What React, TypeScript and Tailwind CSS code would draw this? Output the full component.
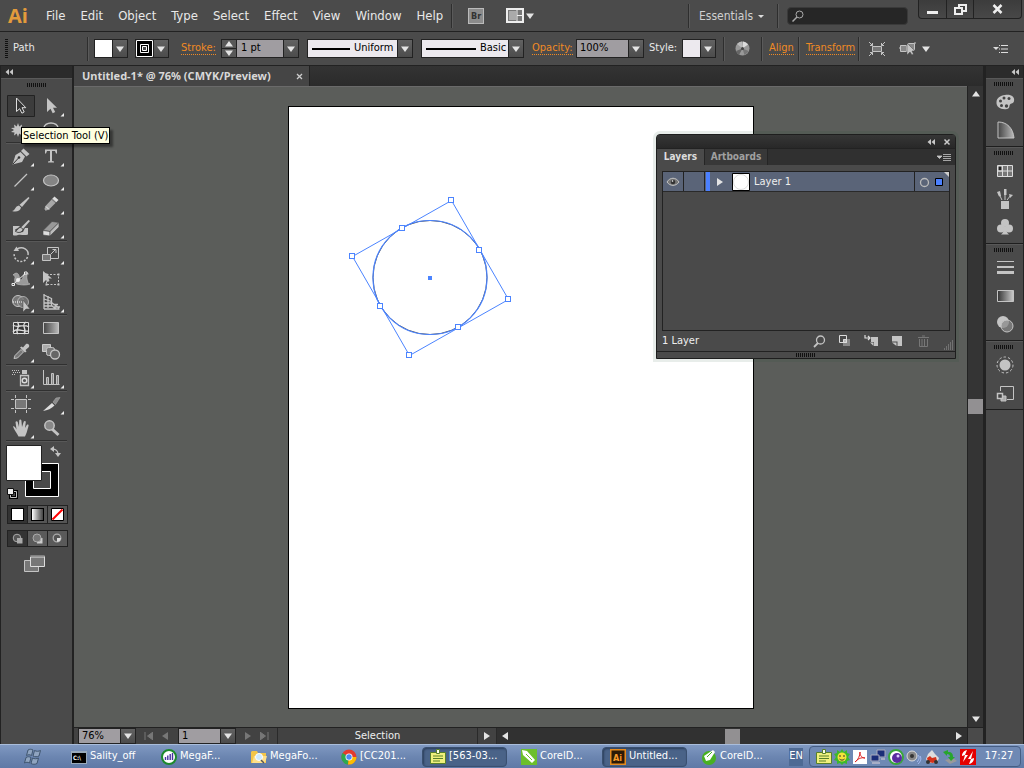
import React from 'react';

const menus = ['File', 'Edit', 'Object', 'Type', 'Select', 'Effect', 'View', 'Window', 'Help'];

const L = '#c4c4c4';

const Caret = ({ dir = 'down', color = '#e4e4e4' }: { dir?: 'down' | 'up' | 'left' | 'right'; color?: string }) => {
  const shapes = {
    down: 'M0 1.500h8L4 7z',
    up: 'M0 6.500h8L4 1z',
    left: 'M7 0v8L1 4z',
    right: 'M1 0v8L7 4z',
  };
  return (
    <svg width="8" height="8" viewBox="0 0 8 8" aria-hidden="true">
      <path d={shapes[dir]} fill={color} />
    </svg>
  );
};

const DoubleLeft = () => (
  <svg width="8" height="6" viewBox="0 0 8 6" aria-hidden="true">
    <path d="M4 0v6L0.5 3zM8 0v6L4.500 3z" fill="#c8c8c8" />
  </svg>
);

const Grip = () => (
  <svg width="20" height="4" viewBox="0 0 20 4" aria-hidden="true">
    <path d="M0.5 0v4M2.500 0v4M4.500 0v4M6.500 0v4M8.500 0v4M10.500 0v4M12.500 0v4M14.500 0v4M16.500 0v4M18.500 0v4" stroke="#111" />
  </svg>
);

const Divider = () => <span className="h-6 w-px shrink-0 bg-[#2e2e2e] shadow-[1px_0_0_#5a5a5a]" />;

const DropButton = ({ label }: { label: string }) => (
  <button aria-label={label} className="flex h-full w-[15px] shrink-0 items-center justify-center border-l border-[#222] bg-linear-to-b from-[#626262] to-[#4c4c4c]">
    <Caret />
  </button>
);

const SwatchPicker = ({ label, children }: { label: string; children: React.ReactNode }) => (
  <div className="flex h-[19px] w-[34px] shrink-0 border border-[#222]">
    <button aria-label={label} className="flex-1">
      {children}
    </button>
    <DropButton label={label + ' options'} />
  </div>
);

const LineSelect = ({ id, value, width, line }: { id: string; value: string; width: string; line: number }) => (
  <div className={'flex h-[19px] shrink-0 items-center border border-[#222] bg-[#ece9ee] ' + width}>
    <svg className="ml-1 shrink-0" width={line} height="2" aria-hidden="true">
      <path d={'M0 1h' + line} stroke="#000" strokeWidth="2" />
    </svg>
    <select id={id} aria-label={value + ' profile'} className="h-full min-w-0 flex-1 appearance-none bg-transparent pl-1 text-[11px] text-black">
      <option>{value}</option>
    </select>
    <DropButton label={value + ' options'} />
  </div>
);

const accent = 'border-b border-dotted border-[#f08a24] text-[11px] leading-3 text-[#f08a24]';

/* ---------- tool glyphs, each on a 30x24 cell ---------- */

const glyphs: Record<string, React.ReactNode> = {
  Selection: <path d="M10.5 4v13.500l3.200-2.800 2.200 4.500 2.300-1.200-2.200-4.300h3.800z" fill="#333" stroke="#ddd" />,
  'Direct Selection': <path d="M11 4v14l3.500-3.200 2.200 4.400 2.500-1.200-2.200-4.300H21z" fill={L} />,
  'Magic Wand': (
    <path d="M12 5l1.200 3.500L16 6.500l-.5 3.300 3.500.2-3 2 3 2-3.500.4.5 3.100-2.800-2-1.200 3.500-1.200-3.500L8 17.500l.5-3.100L5 14l3-2-3-2 3.500-.2L8 6.500l2.800 2z" fill={L} />
  ),
  Lasso: (
    <g fill="none" stroke={L} strokeWidth="1.500">
      <ellipse cx="15" cy="10" rx="7" ry="5" />
      <path d="M10 13c4-5 8-1 5 1s-5 0-4 4" />
    </g>
  ),
  Pen: (
    <g>
      <path d="M6.500 20.500l3-9.500 5-3 4.500 4.500-3 5.500z" fill={L} />
      <path d="M15 7l2.500-2.500 6 5.500-3 2.500z" fill={L} />
      <path d="M7 20l5.500-6" stroke="#333" />
      <circle cx="13" cy="13.500" r="1.300" fill="#333" />
    </g>
  ),
  Type: <path d="M9 5.500h12v4h-1l-1-2.500h-3v10l2 .5v1h-6v-1l2-.5V7h-3l-1 2.500H9z" fill={L} />,
  'Line Segment': <path d="M8.500 18.500L21 6" stroke={L} strokeWidth="1.300" />,
  Ellipse: <ellipse cx="15" cy="12.500" rx="7.500" ry="5.500" fill="#858585" stroke={L} strokeWidth="1.200" />,
  Paintbrush: (
    <g fill={L}>
      <path d="M22.500 5L23.500 6 16 15l-2.500-2.200z" />
      <path d="M6 19c3 0 3-5 7-5.500l2 2C14.500 19 10 20.500 6 19z" />
    </g>
  ),
  Pencil: (
    <g>
      <path d="M7.500 19.500l2-5.500L17 6l4 3.500-8 8z" fill="#a8a8a8" />
      <path d="M16.500 6.500l2-2 4 3.500-2 2z" fill="#ddd" />
      <path d="M7.500 19.500l.6-2 1.200 1.200zM16 7.500l4 3.500" fill="#333" stroke="#444" strokeWidth=".6" />
      <path d="M10 14.500l3 3" stroke="#eee" />
    </g>
  ),
  'Blob Brush': (
    <g fill={L}>
      <path d="M7 10h7l-2 2-3 1.500L12 17l5-1 2-4h3v6.500c-4 1.500-7-.5-10 .5-2 .5-4 1-5 0z" />
      <path d="M22.500 4l1.500 1-7 8-2-1.500z" />
      <path d="M9 15c3 0 3-4 6-3.500l2 1.800c-1 3.500-5 4-8 1.700z" stroke="#333" strokeWidth=".7" />
    </g>
  ),
  Eraser: (
    <g stroke="#444" strokeWidth=".6">
      <path d="M7 14.500L16 5.500l7 1-9 9z" fill="#999" />
      <path d="M7 14.500l7 1v4.500l-7-1z" fill="#ddd" />
      <path d="M14 15.500l9-9v4.500l-9 9z" fill="#bbb" />
    </g>
  ),
  Rotate: (
    <g fill="none" stroke={L} strokeWidth="1.500">
      <path d="M11 7c6-3.500 12 1 11 6" />
      <path d="M21.500 15c-2 6-11 6-13 0-.5-2-.3-3 0-4" strokeDasharray="2 1.500" />
      <path d="M7.500 9l3-4.500 2.500 4.500z" fill={L} stroke="none" />
    </g>
  ),
  Scale: (
    <g fill="none" stroke={L}>
      <path d="M11.500 12V5.500h11v11H15" />
      <path d="M6.500 12.500h8v6h-8z" fill="#777" />
      <path d="M15 12l5-5M16.500 7.500h3.500v3.500" />
    </g>
  ),
  Warp: (
    <g>
      <path d="M7 9c4-4 6-1 6.500 3 1 3 3 2 3.500-1 .5-4 3-6 5.500-3-1.500-.5-2 2-1.500 5 .5 3 1.500 5 3 5-4 1.500-8 1-11 .5-4-.5-5-3-4-7 0-1.500-1-2.500-2-2.500z" fill="#999" stroke={L} strokeWidth=".6" />
      <path d="M7 18.500L12 14l8-7" stroke="#eee" />
      <path d="M6 17.500h2.500v2H6zM18.500 6h2.500v2h-2.500z" fill="#444" stroke="#eee" />
      <circle cx="12" cy="14" r="2" fill="#eee" />
    </g>
  ),
  'Free Transform': (
    <g>
      <path d="M10.500 8.500h12v10h-12z" fill="none" stroke={L} strokeDasharray="2 1.500" />
      <path d="M9.500 7.500h2v2h-2zM21.500 7.500h2v2h-2zM9.500 17.500h2v2h-2zM21.500 17.500h2v2h-2z" fill={L} />
      <path d="M7 5v12l3-3 1.500 2 2-1-1-2.500H16z" fill={L} />
    </g>
  ),
  'Shape Builder': (
    <g>
      <circle cx="12" cy="11" r="5.500" fill="#777" stroke={L} />
      <circle cx="17" cy="12" r="5.500" fill="#777" stroke={L} opacity=".8" />
      <path d="M7 12h10" stroke="#fff" strokeDasharray="1 1" />
      <path d="M17 10v12l3-3h4z" fill={L} stroke="#444" strokeWidth=".5" />
    </g>
  ),
  'Perspective Grid': (
    <g stroke={L} fill="none" strokeWidth="1.300">
      <path d="M8 4v15M12 6v12M15.500 8v8" />
      <path d="M8 5l7.500 3.500M8 9l7.500 2.500M8 13h8l7 5M8 16h8l4 3M8 19h15.500M17 14.500h5M18 17h6" />
    </g>
  ),
  Mesh: (
    <g fill="none" stroke="#ddd">
      <path d="M7.500 6.500h15v11h-15z" fill="#383838" />
      <path d="M11 6c5 4-3 8 1 12M20 6c-6 4 2 7-2 12M7 9c5 4 9-2 16 2M7 16c4-5 9 0 16-1" strokeWidth="1.400" />
    </g>
  ),
  Gradient: <path d="M7.500 6.500h15v11h-15z" fill="url(#toolGradient)" stroke={L} />,
  Eyedropper: (
    <g>
      <path d="M8 18.500l1-3 6-6 2.500 2.500-6 6z" fill="#777" stroke={L} />
      <path d="M14 7.500l1.500-1 1.500 1 3-3.500c2-1 4 1 3 3l-3.500 3 1 1.500-1.500 1z" fill={L} />
    </g>
  ),
  Blend: (
    <g stroke={L}>
      <path d="M6.500 4.500h8v7h-8z" fill="#aaa" stroke="#ccc" />
      <rect x="10.500" y="7.500" width="8" height="8" rx="2" fill="#777" />
      <circle cx="19" cy="14.500" r="4.500" fill="#666" strokeWidth="1.300" />
    </g>
  ),
  'Symbol Sprayer': (
    <g>
      <path d="M6 4.500h8M7 6.500h7M6 8.500h4" stroke={L} strokeDasharray="1 1" />
      <path d="M14.500 9.500h8v10h-8z" fill="#555" stroke={L} strokeWidth="1.300" />
      <path d="M16 4h5v4h-5z" fill={L} />
      <circle cx="18.500" cy="14.500" r="2.300" fill="none" stroke="#ddd" strokeWidth="1.400" />
    </g>
  ),
  'Column Graph': (
    <g fill="#888" stroke={L}>
      <path d="M7.500 4v14.500h16" fill="none" />
      <path d="M10.500 11.500h2v7h-2zM15.500 7.500h2v11h-2zM20.500 9.500h2v9h-2z" />
    </g>
  ),
  Artboard: (
    <g stroke={L} fill="none">
      <path d="M9.500 7.500h11v9h-11z" fill="#777" />
      <path d="M5 7.500h3M22 7.500h3M5 16.500h3M22 16.500h3M9.500 3v3M20.500 3v3M9.500 18v3M20.500 18v3" />
    </g>
  ),
  Slice: (
    <g>
      <path d="M7 19l9-8 2.500 2.500c-3 3-7 5-11.500 5.500z" fill="#ddd" />
      <path d="M17 10l3-4 4-.5-4.500 7z" fill="#8c8c8c" stroke="#aaa" strokeWidth=".6" />
    </g>
  ),
  Hand: (
    <path d="M7 10.500c1-.8 2 .3 3.500 3L9.500 6c.5-1.300 2-1 2.200 0l1.300 5 .2-6.500c.4-1.200 1.800-1.200 2.200 0L16 11l1.800-5.500c.5-1 2-.7 2 .5L19 12l1.800-3c.8-1 2-.3 1.800.7l-2 7-1.600 3.800h-6.500C11 17 8 14 7 10.500z" fill={L} />
  ),
  Zoom: (
    <g>
      <path d="M16 13l6.500 6" stroke={L} strokeWidth="3" />
      <circle cx="13.500" cy="9.500" r="4.700" fill="#888" stroke={L} strokeWidth="1.500" />
    </g>
  ),
};

const toolGroups: string[][] = [
  ['Selection', 'Direct Selection', 'Magic Wand', 'Lasso'],
  ['Pen', 'Type', 'Line Segment', 'Ellipse', 'Paintbrush', 'Pencil', 'Blob Brush', 'Eraser'],
  ['Rotate', 'Scale', 'Warp', 'Free Transform', 'Shape Builder', 'Perspective Grid'],
  ['Mesh', 'Gradient', 'Eyedropper', 'Blend'],
  ['Symbol Sprayer', 'Column Graph'],
  ['Artboard', 'Slice', 'Hand', 'Zoom'],
];

const noFlyout = ['Selection', 'Magic Wand', 'Lasso', 'Paintbrush', 'Blob Brush', 'Free Transform', 'Mesh', 'Gradient', 'Blend', 'Artboard', 'Zoom'];

const Tool = ({ name }: { name: string }) => (
  <button aria-label={name + ' Tool'} className="h-6 w-[30px]">
    <svg width="30" height="24" viewBox="0 0 30 24">
      {name === 'Selection' && <path d="M1.500 1.500h27v21h-27z" fill="#3c3c3c" stroke="#222" />}
      {glyphs[name]}
      {!noFlyout.includes(name) && <path d="M28 19v3.500h-3.500z" fill="#eee" />}
    </svg>
  </button>
);

const Toolbar = () => (
  <aside className="relative flex w-[74px] shrink-0 flex-col border-x border-[#222] border-r-2 bg-[#4a4a4a]">
    <div className="flex h-3 items-center bg-[#2b2b2b] pl-1">
      <DoubleLeft />
    </div>
    <div className="flex h-4 justify-center border-t border-[#5a5a5a] pt-1">
      <Grip />
    </div>
    {toolGroups.map((group) => (
      <div key={group[0]} className="mx-[5px]">
        <div className="grid w-[60px] grid-cols-2">
          {group.map((name) => (
            <Tool key={name} name={name} />
          ))}
        </div>
        <div className="h-0.5 border-t border-b border-t-[#303030] border-b-[#585858]" />
      </div>
    ))}
    <button aria-label="Fill and Stroke" className="ml-[5px] h-[63px] w-[60px]">
      <svg className="block" width="60" height="62" viewBox="0 0 60 62">
        <path d="M19.500 20.500h33v33h-33z" fill="#000" stroke="#fff" />
        <path d="M27.500 28.500h17v17h-17z" fill="#4a4a4a" stroke="#fff" />
        <path d="M.5 2.500h35v35H.5z" fill="#fff" stroke="#222" />
        <path d="M46 6c5 0 6 2 6 6" fill="none" stroke={L} strokeWidth="1.300" />
        <path d="M44 6l4-3v6zM49 10h6l-3 4z" fill={L} />
        <path d="M4.500 48.500h6v6h-6z" fill="none" stroke="#000" strokeWidth="3" />
        <path d="M4.500 48.500h6v6h-6z" fill="none" stroke={L} />
        <path d="M1.500 45.500h6v6h-6z" fill="#eee" stroke="#111" />
      </svg>
    </button>
    <div className="mx-[6px] flex h-[19px] w-[61px] border border-[#222]">
      <button aria-label="Color" className="flex flex-1 items-center justify-center bg-[#333]">
        <span className="size-[13px] border border-black bg-white" />
      </button>
      <button aria-label="Gradient" className="flex flex-1 items-center justify-center border-x border-[#222] bg-[#555]">
        <span className="size-[13px] border border-black bg-linear-to-r from-white to-[#444]" />
      </button>
      <button aria-label="None" className="flex flex-1 items-center justify-center bg-[#555]">
        <svg width="13" height="13" viewBox="0 0 13 13">
          <path d="M.5.5h12v12H.5z" fill="#fff" stroke="#000" />
          <path d="M1.500 11.500l10-10" stroke="#f00" strokeWidth="2" />
        </svg>
      </button>
    </div>
    <div className="mx-[6px] mt-1.5 flex h-[17px] w-[61px] border border-[#222] bg-[#5a5a5a]">
      <button aria-label="Draw Normal" className="flex flex-1 items-center justify-center bg-[#333]">
        <svg width="13" height="12" viewBox="0 0 13 12">
          <circle cx="6" cy="5" r="3.800" fill="#555" stroke="#aaa" />
          <path d="M6 5h5.500v5.500H6z" fill="#aaa" />
        </svg>
      </button>
      <button aria-label="Draw Behind" className="flex flex-1 items-center justify-center border-x border-[#222]">
        <svg width="13" height="12" viewBox="0 0 13 12">
          <path d="M6 5h5.500v5.500H6z" fill="#ccc" />
          <circle cx="6" cy="5" r="4" fill="#777" stroke="#aaa" />
        </svg>
      </button>
      <button aria-label="Draw Inside" className="flex flex-1 items-center justify-center">
        <svg width="13" height="12" viewBox="0 0 13 12">
          <circle cx="6" cy="5" r="3.800" fill="#555" stroke="#aaa" strokeWidth="1.300" />
          <path d="M6 5h4L9 8 6 9z" fill="#ddd" />
        </svg>
      </button>
    </div>
    <button aria-label="Screen Mode" className="mt-2 ml-[23px] h-[18px] w-[22px]">
      <svg width="22" height="18" viewBox="0 0 22 18">
        <path d="M.5 5.500h14v11H.5z" fill="#777" stroke={L} />
        <path d="M6.500.5h14v11h-14z" fill="#777" stroke="#ddd" />
        <path d="M6 1h15" stroke="#222" />
        <path d="M7 2h14" stroke="#ddd" />
      </svg>
    </button>
    <div role="tooltip" className="absolute top-[61px] left-5 z-20 border border-black bg-[#ffffe1] px-px text-[11px] leading-[15px] whitespace-nowrap text-black shadow-[3px_3px_2px_#0006]">
      Selection Tool (V)
    </div>
  </aside>
);

/* ---------- document ---------- */

const handles = [[451, 200], [508, 299], [409, 355], [352, 256], [402, 228], [479, 250], [458, 327], [380, 306]];

const Artboard = () => (
  <svg className="h-[603px] w-[466px] shrink-0 border border-black bg-white" viewBox="289 107 464 601">
    <ellipse cx="430" cy="277.500" rx="57" ry="57" fill="none" stroke="#555" strokeWidth="1" />
    <ellipse cx="430" cy="277.500" rx="57" ry="57" fill="none" stroke="#4b84ff" strokeWidth="1.200" />
    <path d="M451.500 200.500l57 99-99 56-57-99z" fill="none" stroke="#4b84ff" />
    {handles.map(([x, y]) => (
      <rect key={x} x={x - 2.5} y={y - 2.5} width="5" height="5" fill="#fff" stroke="#4b84ff" />
    ))}
    <rect x="428" y="276" width="4" height="4" fill="#4b84ff" />
  </svg>
);

const LayersPanel = () => (
  <section aria-label="Layers" className="absolute top-[47px] right-[11px] z-10 flex h-[225px] w-[300px] flex-col rounded-t-sm border border-[#1e1e1e] bg-[#4a4a4a] text-[11px] shadow-[0_0_0_3px_#1e50321a]">
    <div className="flex h-[14px] shrink-0 items-center justify-end gap-2 border-b border-[#222] bg-linear-to-b from-[#363636] to-[#282828] pr-1">
      <button aria-label="Collapse panel">
        <DoubleLeft />
      </button>
      <button aria-label="Close panel">
        <svg className="block" width="8" height="8" viewBox="0 0 8 8">
          <path d="M1.500 1.500l5 5M6.500 1.500l-5 5" stroke="#ccc" strokeWidth="1.500" />
        </svg>
      </button>
    </div>
    <div role="tablist" className="flex h-4 shrink-0 bg-[#303030] text-[10px] leading-4 font-bold">
      <button role="tab" className="w-[47px] bg-[#4a4a4a] text-[#ddd]">Layers</button>
      <button role="tab" className="w-16 border-x border-[#252525] bg-[#383838] text-[#a0a0a0]">Artboards</button>
      <button aria-label="Panel menu" className="mr-1 ml-auto">
        <svg width="14" height="9" viewBox="0 0 14 9">
          <path d="M0 3h5L2.500 5.500zM6 1.500h8M6 3.500h8M6 5.500h8M6 7.500h8" fill={L} stroke={L} strokeWidth=".8" />
        </svg>
      </button>
    </div>
    <div className="mx-[5px] mt-[6px] flex-1 border border-[#222]">
      <div className="flex h-5 items-stretch border-b border-[#2a2a2a] bg-[#5a6478] text-[#eee]">
        <button aria-label="Toggle visibility" className="flex w-[21px] items-center justify-center border-r border-[#222]">
          <svg width="14" height="10" viewBox="0 0 14 10">
            <path d="M1 5c3-5 9-5 12 0-3 4.500-9 4.500-12 0z" fill="#777" stroke={L} />
            <circle cx="7" cy="5" r="2.300" fill="#333" />
            <circle cx="6.500" cy="4" r=".8" fill="#fff" />
          </svg>
        </button>
        <button aria-label="Toggle lock" className="w-[21px] border-r border-[#222]" />
        <span className="ml-px w-[4px] bg-[#4b80ff]" />
        <button aria-label="Expand layer" className="ml-[5px] flex w-[10px] items-center justify-center">
          <Caret dir="right" />
        </button>
        <svg className="ml-[7px] self-center" width="18" height="18" viewBox="0 0 18 18">
          <path d="M.5.5h17v17H.5z" fill="#fff" stroke="#000" />
          <circle cx="9" cy="9" r="7.500" fill="none" stroke="#ddd" />
        </svg>
        <span className="ml-1 flex-1 leading-5">Layer 1</span>
        <span className="flex w-[35px] border-l border-[#222]">
          <svg width="34" height="20" viewBox="0 0 34 20">
            <circle cx="9.500" cy="10.500" r="4" fill="none" stroke="#bbb" strokeWidth="1.300" />
            <path d="M20.500 6.500h7v7h-7z" fill="#4b80ff" stroke="#000" />
            <path d="M29 0h5v5z" fill="#ccc" />
          </svg>
        </span>
      </div>
    </div>
    <div className="flex h-5 shrink-0 items-center pl-[5px] text-[#eee]">
      <span className="flex-1">1 Layer</span>
      <button aria-label="Locate object" className="flex w-[26px] justify-center">
        <svg width="13" height="13" viewBox="0 0 13 13">
          <circle cx="7.500" cy="5" r="4" fill="none" stroke={L} strokeWidth="1.300" />
          <path d="M5 8l-4 4" stroke={L} strokeWidth="1.800" />
        </svg>
      </button>
      <button aria-label="Clipping mask" className="flex w-[26px] justify-center">
        <svg width="12" height="12" viewBox="0 0 12 12">
          <path d="M4 4h7v7H4z" fill="#888" />
          <path d="M.5.5h7v7h-7z" fill="none" stroke="#ddd" />
          <path d="M4.500 4.500h3v3h-3z" fill="#bbb" stroke="#ddd" />
        </svg>
      </button>
      <button aria-label="New sublayer" className="flex w-[26px] justify-center">
        <svg width="15" height="12" viewBox="0 0 15 12">
          <path d="M1 0v3h5M4 1l2 2-2 2" fill="none" stroke="#ddd" strokeWidth="1.200" />
          <path d="M7 2h7v9h-4V7H7z" fill={L} />
          <path d="M6 7.500h3.500V11z" fill={L} />
        </svg>
      </button>
      <button aria-label="New layer" className="flex w-[26px] justify-center">
        <svg width="12" height="12" viewBox="0 0 12 12">
          <path d="M1 1h10v10H6.500V6.500H1z" fill={L} />
          <path d="M1 7.500h4.500V11z" fill={L} />
        </svg>
      </button>
      <button aria-label="Delete layer" className="flex w-[26px] justify-center">
        <svg width="11" height="12" viewBox="0 0 11 12">
          <path d="M0 2.500h11M4 1h3M1.500 4v7.500h8V4M4 4v7M6.500 4v7" fill="none" stroke="#777" />
        </svg>
      </button>
      <svg className="mb-px ml-2 self-end" width="11" height="10" viewBox="0 0 11 10">
        <path d="M0 9h10M2 7h8M4 5h6M6 3h4M8 1h2" stroke="#999" strokeDasharray="1 1" />
      </svg>
    </div>
    <div className="flex h-[7px] shrink-0 justify-center border-t border-[#222] pt-px">
      <Grip />
    </div>
  </section>
);

const StatusBar = () => (
  <div className="flex h-[17px] shrink-0 items-stretch border-t border-[#222] bg-[#424242] text-[11px]">
    <div className="ml-1 flex w-[58px] border border-[#222]">
      <input aria-label="Zoom level" defaultValue="76%" className="w-[41px] bg-[#a09da1] pl-[3px] text-[11px] text-black" />
      <DropButton label="Zoom presets" />
    </div>
    <button aria-label="First artboard" className="ml-2">
      <svg width="9" height="8" viewBox="0 0 9 8"><path d="M1 0v8M9 0v8L3.500 4z" fill="#777" stroke="#777" /></svg>
    </button>
    <button aria-label="Previous artboard" className="ml-2"><Caret dir="left" color="#777" /></button>
    <div className="ml-[9px] flex w-[58px] border border-[#222]">
      <input aria-label="Artboard number" defaultValue="1" className="w-[41px] bg-[#a09da1] pl-[3px] text-[11px] text-black" />
      <DropButton label="Artboards" />
    </div>
    <button aria-label="Next artboard" className="ml-2"><Caret dir="right" color="#777" /></button>
    <button aria-label="Last artboard" className="ml-2">
      <svg width="9" height="8" viewBox="0 0 9 8"><path d="M8 0v8M0 0v8l5.500-4z" fill="#777" stroke="#777" /></svg>
    </button>
    <div className="ml-2 w-[200px] border-l border-[#2a2a2a] text-center leading-4 text-[#eee]">Selection</div>
    <button aria-label="Status options" className="flex w-5 items-center justify-center border-x border-[#2a2a2a]">
      <Caret dir="right" />
    </button>
    <div className="flex flex-1 items-center justify-between bg-[#313131] px-1">
      <button aria-label="Scroll left"><Caret dir="left" /></button>
      <span className="size-[15px] bg-[#929092]" />
      <button aria-label="Scroll right"><Caret dir="right" /></button>
    </div>
    <div className="w-4 border-l border-[#222] bg-[#4a4a4a]" />
  </div>
);

const Document = () => (
  <main className="flex min-w-0 flex-1 flex-col border-r-2 border-[#222]">
    <div className="flex h-5 shrink-0 bg-linear-to-b from-[#333] to-[#2b2b2b]">
      <div className="flex w-[236px] items-center justify-between border-r border-[#222] bg-[#454545] pr-[6px] pl-2 font-['Noto_Sans',sans-serif] text-[11px] font-bold whitespace-nowrap text-[#d8d8d8]">
        Untitled-1* @ 76% (CMYK/Preview)
        <button aria-label="Close document">
          <svg className="block" width="7" height="7" viewBox="0 0 7 7">
            <path d="M1 1l5 5M6 1L1 6" stroke="#ccc" strokeWidth="1.300" />
          </svg>
        </button>
      </div>
    </div>
    <div className="flex min-h-0 flex-1">
      <div className="relative flex min-w-0 flex-1 items-center justify-center border-t border-[#6a6a6a] bg-[#5b5d5a] pl-px">
        <Artboard />
        <LayersPanel />
      </div>
      <div className="flex w-4 shrink-0 flex-col items-center justify-between border-l border-[#222] bg-[#343434] py-1">
        <button aria-label="Scroll up"><Caret dir="up" /></button>
        <span className="size-[15px] bg-[#929092]" />
        <button aria-label="Scroll down"><Caret /></button>
      </div>
    </div>
    <StatusBar />
  </main>
);

/* ---------- right dock ---------- */

const dock: { name: string; icon: React.ReactNode }[][] = [
  [
    { name: 'Color', icon: <g><path d="M10 3c6-1 10 2 9 6-.5 3-3 2-4 3.500s0 4-3 4.500C6 18 1 15 1.500 10 1.800 6 5 3.500 10 3z" fill={L} /><g fill="#444"><circle cx="5.500" cy="9" r="1.500" /><circle cx="9" cy="6" r="1.500" /><circle cx="14" cy="6.500" r="1.500" /><circle cx="6.500" cy="13.500" r="1.500" /><circle cx="11.500" cy="14" r="1.700" /></g></g> },
    { name: 'Color Guide', icon: <path d="M3 2c9 0 15 6 16 16H3z" fill="url(#toolGradient)" stroke={L} /> },
  ],
  [
    { name: 'Swatches', icon: <g stroke="#ddd"><path d="M2.500 4.500h15v11h-15z" fill="#777" /><path d="M3 5h4v5H3z" fill="#222" /><path d="M2 10h16M7.500 4v12M12.500 4v12" fill="none" /></g> },
    { name: 'Brushes', icon: <g><path d="M6 12h8v8H6z" fill={L} /><path d="M7 11L4 5M10 11V2M12 11l4-5" stroke={L} /><path d="M2 3l3-1 1 5-2 .5zM9 0h2.500v6H9zM14 5l4 1-3 3z" fill={L} /></g> },
    { name: 'Symbols', icon: <g fill={L}><circle cx="10" cy="6" r="4" /><circle cx="6" cy="11.500" r="4" /><circle cx="14" cy="11.500" r="4" /><path d="M9 10h2c0 4 1 6 3 7.500H6c2-1.500 3-3.500 3-7.500z" /></g> },
  ],
  [
    { name: 'Stroke', icon: <g fill={L}><path d="M2 3h17v1H2zM2 8h17v2H2zM2 13h17v3H2z" /></g> },
    { name: 'Gradient', icon: <path d="M2.500 4.500h16v11h-16z" fill="url(#dockGradient)" stroke={L} /> },
    { name: 'Transparency', icon: <g><circle cx="8" cy="8" r="6" fill={L} /><circle cx="12" cy="12" r="6" fill="#888b" stroke={L} /></g> },
  ],
  [
    { name: 'Appearance', icon: <g><circle cx="10" cy="10" r="5.500" fill={L} /><circle cx="10" cy="10" r="8" fill="none" stroke={L} strokeDasharray="2.500 2" /></g> },
    { name: 'Graphic Styles', icon: <g fill="none" stroke={L}><path d="M5.500 8V3.500h13v13H12" /><path d="M6 13h5v5H6z" fill="#aaa" /><path d="M2.500 10.500h5v5h-5z" strokeWidth="1.500" fill="#444" /></g> },
  ],
];

const Dock = () => (
  <aside className="flex w-[39px] shrink-0 flex-col border-x border-[#222] bg-[#4a4a4a]">
    <div className="flex h-3 items-center justify-end bg-[#2b2b2b] pr-1">
      <DoubleLeft />
    </div>
    {dock.map((group) => (
      <div key={group[0].name} className="flex flex-col items-center border-b border-[#1e1e1e] pb-[2px]">
        <div className="h-[10px] w-full border-t border-[#585858] pt-[3px] pl-2">
          <Grip />
        </div>
        {group.map(({ name, icon }) => (
          <button key={name} aria-label={name} className="flex h-7 w-full items-center justify-center">
            <svg width="20" height="20" viewBox="0 0 20 20">{icon}</svg>
          </button>
        ))}
      </div>
    ))}
  </aside>
);

/* ---------- top bars ---------- */

const MenuBar = () => (
  <header className="flex h-[31px] shrink-0 items-center bg-[#4b4b4b] text-[#e8e8e8]">
    <span className="w-[46px] pl-2 font-['Open_Sans',sans-serif] text-[20px] leading-6 font-bold text-[#e39b3c]">Ai</span>
    <nav className="flex gap-[15px] text-[13px]">
      {menus.map((m) => (
        <button key={m}>{m}</button>
      ))}
    </nav>
    <span className="ml-2 flex items-center">
      <Divider />
    </span>
    <button aria-label="Bridge" className="ml-4 size-4 border border-[#bbb] bg-[#8c8c8c] text-[9px] leading-3 font-bold text-[#333]">Br</button>
    <button aria-label="Arrange documents" className="ml-[22px] flex items-center gap-0.5">
      <svg width="18" height="15" viewBox="0 0 18 15">
        <path d="M1 1h16v13H1z" fill="#777" stroke="#eee" strokeWidth="2" />
        <path d="M3 3h7v9H3z" fill="#aaa" />
        <path d="M11 2v11M11 7.500h6" stroke="#eee" />
      </svg>
      <Caret />
    </button>
    <div className="ml-auto flex h-full items-center">
      <Divider />
      <select aria-label="Workspace" className="ml-[10px] w-[58px] appearance-none text-[12px] text-[#d0d0d0]">
        <option>Essentials</option>
      </select>
      <svg className="mr-3" width="8" height="8" viewBox="0 0 8 8"><path d="M1 3h6L4 6z" fill="#ddd" /></svg>
      <Divider />
      <label className="ml-[9px] flex h-[18px] w-[121px] items-center rounded-sm border border-[#3a3a3a] bg-[#262626] pl-1">
        <svg width="12" height="12" viewBox="0 0 12 12" fill="none" stroke="#aaa">
          <circle cx="7.500" cy="4.500" r="3.500" />
          <path d="M5 7l-4.500 4.500" strokeWidth="1.500" />
        </svg>
        <input type="search" aria-label="Search" className="min-w-0 flex-1" />
      </label>
      <div className="mr-[2px] ml-[10px] flex h-[19px] self-start rounded-b-sm border border-t-0 border-[#222] bg-linear-to-b from-[#3c3c3c] to-[#484848]">
        <button aria-label="Minimize" className="flex w-[27px] items-center justify-center">
          <svg width="11" height="11" viewBox="0 0 11 11"><path d="M0 7h11v3H0z" fill="#eee" /></svg>
        </button>
        <button aria-label="Restore" className="flex w-[28px] items-center justify-center border-x border-[#222]">
          <svg width="13" height="11" viewBox="0 0 13 11" fill="none" stroke="#eee" strokeWidth="2">
            <path d="M5 4V1h7v6H9M1 4h7v6H1z" />
          </svg>
        </button>
        <button aria-label="Close" className="flex w-[47px] items-center justify-center">
          <svg width="11" height="10" viewBox="0 0 11 10"><path d="M1.500 1l8 8M9.500 1l-8 8" stroke="#eee" strokeWidth="2.500" /></svg>
        </button>
      </div>
    </div>
  </header>
);

const OptionsBar = () => (
  <div className="flex h-[35px] shrink-0 items-center border-y border-[#222] bg-[#4b4b4b] text-[11px] text-[#e8e8e8]">
    <svg className="ml-[5px] shrink-0" width="3" height="20" viewBox="0 0 3 20">
      <path d="M1.500 0v20" stroke="#111" strokeWidth="3" strokeDasharray="1 1" />
    </svg>
    <span className="ml-[5px] w-[74px]">Path</span>
    <Divider />
    <span className="w-[6px]" />
    <SwatchPicker label="Fill">
      <span className="block h-full bg-white" />
    </SwatchPicker>
    <span className="w-[7px]" />
    <SwatchPicker label="Stroke color">
      <svg className="block" width="17" height="17" viewBox="0 0 17 17">
        <path d="M0 0h17v17H0z" />
        <path d="M.5.5h16v16H.5zM4.500 4.500h8v8h-8z" fill="none" stroke="#fff" />
        <path d="M6.500 6.500h4v4h-4z" fill="#4a4a4a" stroke="#fff" />
      </svg>
    </SwatchPicker>
    <span className="ml-3 w-10 shrink-0">
      <label htmlFor="stroke-width" className={accent}>Stroke:</label>
    </span>
    <div className="flex h-[19px] w-[78px] shrink-0 border border-[#222]">
      <div className="flex w-[15px] flex-col divide-y divide-[#222] border-r border-[#222] bg-[#585858]">
        <button aria-label="Increase stroke" className="flex flex-1 items-center justify-center"><Caret dir="up" /></button>
        <button aria-label="Decrease stroke" className="flex flex-1 items-center justify-center"><Caret /></button>
      </div>
      <input id="stroke-width" defaultValue="1 pt" className="min-w-0 flex-1 bg-[#a09da1] pl-1 text-black" />
      <DropButton label="Stroke weights" />
    </div>
    <span className="w-2 shrink-0" />
    <LineSelect id="profile" value="Uniform" width="w-[106px]" line={38} />
    <span className="w-2 shrink-0" />
    <LineSelect id="brush" value="Basic" width="w-[103px]" line={50} />
    <span className="ml-2 w-11 shrink-0">
      <label htmlFor="opacity" className={accent}>Opacity:</label>
    </span>
    <div className="flex h-[19px] w-[68px] shrink-0 border border-[#222]">
      <input id="opacity" defaultValue="100%" className="min-w-0 flex-1 bg-[#a09da1] pl-[3px] text-black" />
      <DropButton label="Opacity options" />
    </div>
    <span className="ml-[5px] w-[33px] shrink-0">Style:</span>
    <SwatchPicker label="Graphic style">
      <span className="block h-full bg-[#ece9ee]" />
    </SwatchPicker>
    <span className="w-[7px] shrink-0" />
    <Divider />
    <button aria-label="Recolor artwork" className="mx-[11px]">
      <svg className="block" width="15" height="15" viewBox="0 0 15 15">
        <circle cx="7.500" cy="7.500" r="7" fill="#999" />
        <path d="M7.500 7.500L2 3a7 7 0 0 1 5-2.500z" fill="#bbb" />
        <path d="M7.500 7.500L8 .5a7 7 0 0 1 5 3z" fill="#ddd" />
        <path d="M7.500 7.500L1 10a7 7 0 0 0 3 4z" fill="#666" />
        <path d="M7.500 7.500l2 6.500a7 7 0 0 0 4-4z" fill="#777" />
        <circle cx="7.500" cy="7.500" r="1.500" fill="#444" />
      </svg>
    </button>
    <Divider />
    <span className="w-[36px] pl-[7px]">
      <button className={accent}>Align</button>
    </span>
    <Divider />
    <span className="w-[59px] pl-[7px]">
      <button className={accent}>Transform</button>
    </span>
    <Divider />
    <button aria-label="Isolate selected object" className="ml-[10px]">
      <svg className="block" width="16" height="14" viewBox="0 0 16 14" fill="none" stroke={L}>
        <path d="M3.500 4.500h9v5h-9z" fill="#777" />
        <path d="M0 0l3.500 3.500M16 0l-3.500 3.500M0 14l3.500-3.500M16 14l-3.500-3.500M3.500 1v2.500H1M12.500 1v2.500H15M3.500 13v-2.500H1M12.500 13v-2.500H15" />
      </svg>
    </button>
    <button aria-label="Select similar objects" className="ml-[14px] flex items-center gap-[6px]">
      <svg width="17" height="15" viewBox="0 0 17 15">
        <path d="M1.500 4.500h6v6h-6zM9.500 2.500h6v6h-6z" fill="#888" stroke={L} />
        <path d="M0 7h2M16 1v2" stroke={L} />
        <path d="M8 2v12l3-3 2 3 1.500-1-1.500-3h3z" fill={L} stroke="#444" strokeWidth=".5" />
      </svg>
      <Caret />
    </button>
    <button aria-label="Control panel menu" className="mr-4 ml-auto">
      <svg width="15" height="10" viewBox="0 0 15 10">
        <path d="M0 3h6L3 6z" fill="#ddd" />
        <path d="M6 1.500h1M8 1.500h7M6 5h1M8 5h7M6 8.500h1M8 8.500h7" stroke="#ddd" strokeWidth="1.200" />
      </svg>
    </button>
  </div>
);

/* ---------- taskbar ---------- */

const Terminal = <g><path d="M0 2h16v13H0z" fill="#9ab" /><path d="M1 4h14v10H1z" /><text x="2" y="11" fontSize="6" fontWeight="bold" fill="#fff">C:\</text></g>;
const MegaFon = <g><circle cx="8" cy="8" r="7" fill="#fff" stroke="#1d8a2c" strokeWidth="2" /><path d="M4.500 8v3M6.800 6.500V11M9.200 5V11M11.500 4v7" stroke="#4530a0" strokeWidth="1.400" /></g>;
const Folder = <g><path d="M0 3l1-1h5l1 2h8v10H0z" fill="#f3c548" /><path d="M3 7h13l-2 7H1z" fill="#ffe08a" /><circle cx="8" cy="8" r="3.500" fill="#cdeaff" stroke="#fff" /><path d="M10 11l3 3" stroke="#555" strokeWidth="1.500" /></g>;
const Chrome = <g><circle cx="8" cy="8" r="7.500" fill="#e33b2e" /><path d="M8 8l-6.500-4A7.500 7.500 0 0 0 7 15.500z" fill="#2da94f" /><path d="M8 8h7.500a7.500 7.500 0 0 1-8.500 7.500z" fill="#fdbd00" /><circle cx="8" cy="8" r="3.500" fill="#fff" /><circle cx="8" cy="8" r="2.700" fill="#4a8af4" /></g>;
const Note = <g><path d="M.5 3.500h15v11H.5z" fill="#f0f07c" stroke="#58802a" /><path d="M3 7h10M3 9.500h10M3 12h7" stroke="#58802a" /><path d="M6.500.5h3v4h-3z" fill="#ffe" stroke="#58802a" /></g>;
const Corel = <g><path d="M0 0h16v16H0z" fill="#6cbf2b" /><path d="M1 1l5 1 8 9-3 3-9-8z" fill="#fff" /><path d="M5 5l6 6" stroke="#6cbf2b" /></g>;
const Illustrator = <g><path d="M.75.75h14.500v14.500H.75z" fill="#2b1a06" stroke="#e58a1e" strokeWidth="1.500" /><text x="3" y="12" fontSize="9" fontWeight="bold" fill="#f79a2a">Ai</text></g>;
const CorelBall = <g><circle cx="8" cy="9" r="7" fill="#48b022" /><path d="M3 7l9-6 2 2-5 8-4 1z" fill="#fff" /><path d="M6 8l5-5" stroke="#48b022" /></g>;

const tasks = [
  { icon: Terminal, label: 'Sality_off' },
  { icon: MegaFon, label: 'MegaF...' },
  { icon: Folder, label: 'MegaFo...' },
  { icon: Chrome, label: '[CC201...' },
  { icon: Note, label: '[563-03...', active: true },
  { icon: Corel, label: 'CorelD...' },
  { icon: Illustrator, label: 'Untitled...', active: true },
  { icon: CorelBall, label: 'CorelD...' },
];

const tray: { name: string; icon: React.ReactNode }[] = [
  { name: 'Notes', icon: Note },
  { name: 'QIP', icon: <g><path d="M8 0l2 3 3-2v3l3 1-2 3 2 3-3 1v3l-3-1-2 2-2-2-3 1v-3l-3-1 2-3-2-3 3-1V1l3 2z" fill="#3db82c" /><circle cx="8" cy="8" r="4.500" fill="#f4e23a" /><path d="M6 6v2M10 6v2M5.500 10c1.500 1.500 3.500 1.500 5 0" stroke="#333" fill="none" /></g> },
  { name: 'Acrobat', icon: <g><path d="M1 1h14v14H1z" fill="#fff" /><path d="M3 13c3-2 5-6 5-10 0 4 2 6 5 6-4-1-7 1-10 4z" fill="none" stroke="#d22" /></g> },
  { name: 'Network', icon: <g><path d="M7 1h8v7H7z" fill="#1b2d78" stroke="#aab" /><path d="M1 6h8v6H1z" fill="#1b2d78" stroke="#aab" /><path d="M2 14h8M11 10h4" stroke="#bbc" strokeWidth="1.500" /></g> },
  { name: 'Agent', icon: <g><circle cx="8" cy="8" r="7" fill="#fff" stroke="#3aa63c" strokeWidth="2" /><circle cx="9" cy="9" r="5" fill="#5a2aa0" /><circle cx="10" cy="7" r="1.500" fill="#dcf" /></g> },
  { name: 'Volume', icon: <g><circle cx="6" cy="7" r="5" fill="#888" stroke="#ddd" /><circle cx="6" cy="7" r="2" fill="#333" /><path d="M12 6c2 2 1 5-1 7M14 7c2 3 0 6-2 8" stroke="#aabff5" fill="none" /></g> },
  { name: 'Game', icon: <g><path d="M2 10l2-5 4-4 3 4 4 4-2 5H4z" fill="#ddd" /><path d="M3 9l3-2 2 2 4-1 1 4-4 2-5-1z" fill="#d4321c" /><circle cx="4" cy="13" r="2" fill="#333" /><circle cx="12" cy="13" r="2" fill="#333" /></g> },
  { name: 'Remove hardware', icon: <g><path d="M3 11l8-2 4 3-7 3z" fill="#999" /><path d="M1 3l5-2v2c4 0 5 2 5 5h2l-4 4-3-4h2c0-2-1-3-3-3v2z" fill="#27a52c" /></g> },
  { name: 'Antivirus', icon: <g><path d="M0 0h16v16H0z" fill="#e50000" /><path d="M7 1C3 2 2 5 2 7l3-1-2 7 5-7H5zM9 15c4-1 5-4 5-6l-3 1 2-8-5 8h3z" fill="#fff" /></g> },
];

const Taskbar = () => (
  <footer className="flex h-6 shrink-0 items-center border-t border-[#a9bddb] bg-linear-to-b from-[#8099c2] via-[#6c86b1] to-[#5f79a6] text-[11px] text-white">
    <button aria-label="Start" className="ml-6 w-[38px]">
      <svg width="18" height="17" viewBox="0 0 18 17" fill="#8fa4c0" stroke="#40566f">
        <path d="M4 2c2-1 3-1 5 0L7.500 7.500c-2-1-3-1-5 0zM10.500 2.500c2 1 4 1 6 0L15 8c-2 1-4 1-6 0zM2 9.500c2-1 3-1 5 0L5.500 15c-2-1-3-1-5 0zM8.500 10c2 1 4 1 6 0L13 15.500c-2 1-4 1-6 0z" />
      </svg>
    </button>
    <div className="flex gap-[5px]">
      {tasks.map(({ icon, label, active }, i) => (
        <button
          key={i}
          className={
            active
              ? 'flex h-5 w-[85px] items-center gap-[3px] rounded border border-[#3a5070] bg-[#4a6388] pl-[7px] shadow-[inset_1px_1px_2px_#2c3f5c]'
              : 'flex h-5 w-[85px] items-center gap-[3px] border border-transparent pl-[8px]'
          }
        >
          <svg className="shrink-0" width="16" height="16" viewBox="0 0 16 16">{icon}</svg>
          <span className="whitespace-nowrap">{label}</span>
        </button>
      ))}
    </div>
    <button aria-label="Input language" className="ml-auto h-[18px] w-[14px] bg-[#4e6a94]">EN</button>
    <div className="mr-[3px] ml-[6px] flex h-[21px] w-[212px] items-center gap-[2px] rounded border border-[#465e84] bg-[#6f89b4] pl-[6px]">
      {tray.map(({ name, icon }) => (
        <button key={name} aria-label={name}>
          <svg className="block" width="16" height="16" viewBox="0 0 16 16">{icon}</svg>
        </button>
      ))}
      <time className="flex-1 text-center">17:27</time>
    </div>
  </footer>
);

export default function App() {
  return (
    <div className="flex h-screen min-h-[768px] flex-col overflow-hidden bg-[#4a4a4a] font-['DejaVu_Sans_Condensed','Noto_Sans',sans-serif]">
      <svg className="absolute size-0" aria-hidden="true">
        <defs>
          <linearGradient id="toolGradient">
            <stop offset="0" stopColor="#444" />
            <stop offset="1" stopColor="#bbb" />
          </linearGradient>
          <linearGradient id="dockGradient">
            <stop offset="0" stopColor="#333" />
            <stop offset="1" stopColor="#ccc" />
          </linearGradient>
        </defs>
      </svg>
      <MenuBar />
      <OptionsBar />
      <div className="flex min-h-0 flex-1">
        <Toolbar />
        <Document />
        <Dock />
      </div>
      <Taskbar />
    </div>
  );
}
